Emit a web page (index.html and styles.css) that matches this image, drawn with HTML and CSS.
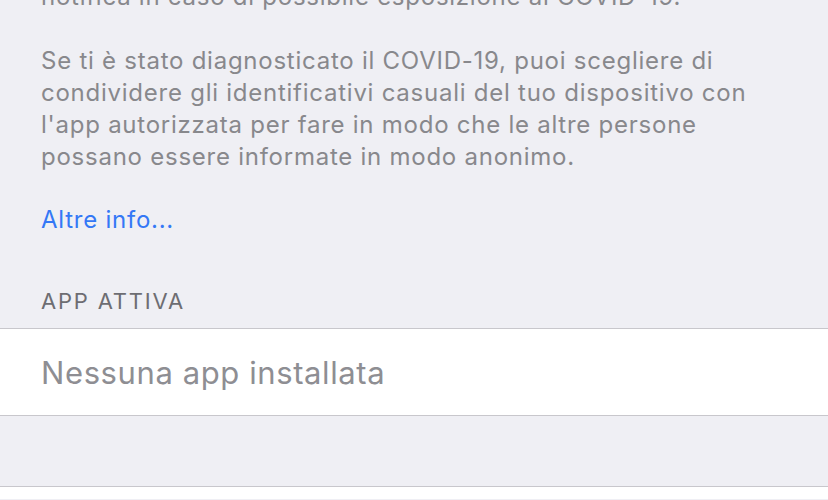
FILE: index.html
```html
<!DOCTYPE html>
<html lang="it">
<head>
  <meta charset="UTF-8">
  <meta name="viewport" content="width=device-width, initial-scale=1.0">
  <title>Notifiche di esposizione</title>
  <link rel="stylesheet" href="styles.css">
</head>
<body>
  <div class="settings">
    <div class="footer-text">
      <p>notifica in caso di possibile esposizione al COVID-19.</p>
      <p class="spaced">Se ti è stato diagnosticato il COVID-19, puoi scegliere di condividere gli identificativi casuali del tuo dispositivo con l'app autorizzata per fare in modo che le altre persone possano essere informate in modo anonimo.</p>
      <a class="link" href="#">Altre info...</a>
    </div>

    <div class="group-header">APP ATTIVA</div>
    <div class="group">
      <div class="cell">Nessuna app installata</div>
    </div>

    <div class="spacer"></div>
    <div class="group bottom"></div>
  </div>
</body>
</html>
```

FILE: styles.css
```css
* {
  margin: 0;
  padding: 0;
  box-sizing: border-box;
}

body {
  background: #efeff4;
  font-family: Inter, "Noto Sans", sans-serif;
  height: 500px;
  overflow: hidden;
}

.settings {
  display: flex;
  flex-direction: column;
}

.footer-text {
  margin-top: -19px;
  padding: 0 41px;
  font-size: 24px;
  letter-spacing: 0.75px;
  line-height: 32px;
  color: #88888c;
  width: 792px;
}

.footer-text .spaced {
  margin-top: 32px;
}

.link {
  display: block;
  margin-top: 31px;
  color: #3478f6;
  text-decoration: none;
}

.group-header {
  margin-top: 51px;
  padding: 0 41px;
  font-size: 22px;
  letter-spacing: 1.8px;
  line-height: 28px;
  color: #6d6d72;
}

.group {
  margin-top: 13px;
  background: white;
  border-top: 1px solid #c8c7cc;
  border-bottom: 1px solid #c8c7cc;
}

.cell {
  height: 86px;
  display: flex;
  align-items: center;
  padding: 0 41px;
  font-size: 31px;
  letter-spacing: 0.6px;
  color: #8e8e93;
}

.spacer {
  height: 70px;
}

.group.bottom {
  margin-top: 0;
  height: 13px;
  border-bottom: none;
}
```
